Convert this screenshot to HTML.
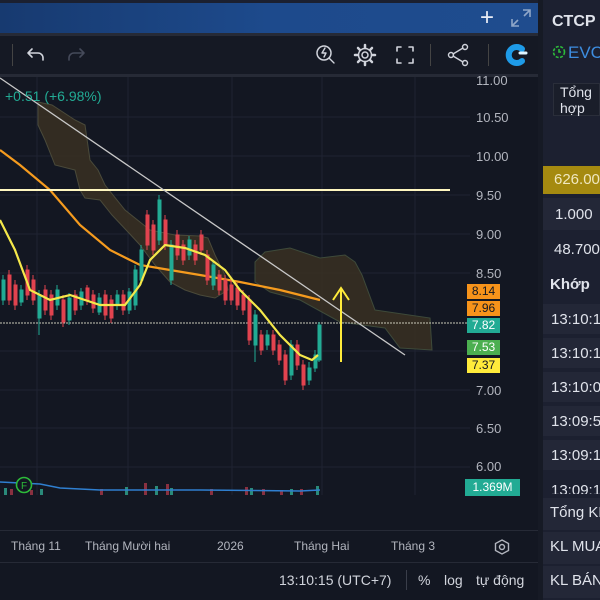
<!DOCTYPE html>
<html><head><meta charset="utf-8"><style>
*{margin:0;padding:0;box-sizing:border-box}
body{width:600px;height:600px;overflow:hidden;background:#131722;font-family:"Liberation Sans",sans-serif;position:relative}
.a{position:absolute}
.rp{left:538px;top:0;width:62px;height:600px;background:#1c2030}
.rt{color:#e0e3eb;font-size:15px;left:552px;white-space:nowrap}
.row{left:543px;width:57px;height:30px;background:#232737}
.pl{left:467px;width:33px;height:15px;font-size:12px;text-align:center;line-height:15px;color:#131722}
.ax{left:476px;color:#b2b5be;font-size:13px}
</style></head><body>
<div class="a" style="left:0;top:0;width:538px;height:3px;background:#1b2030"></div>
<div class="a" style="left:0;top:3px;width:538px;height:30px;background:linear-gradient(90deg,#173a70,#1d4a8c 50%,#1f4c8e)"></div>
<div class="a" style="left:480px;top:6px;color:#e8ecf5;font-size:24px;line-height:24px">+</div>
<svg class="a" style="left:510px;top:8px" width="22" height="20" viewBox="0 0 22 20" fill="none" stroke="#8fa6c8" stroke-width="1.6"><path d="M13 2h7v7M20 2l-6 6M9 18H2v-7M2 18l6-6"/></svg>
<div class="a" style="left:0;top:33px;width:538px;height:3px;background:#262a36"></div>
<div class="a" style="left:0;top:36px;width:538px;height:38px;background:#151924"></div>
<div class="a" style="left:0;top:74px;width:538px;height:3px;background:#262a36"></div>
<div class="a" style="left:12px;top:44px;width:1px;height:22px;background:#444"></div>
<div class="a" style="left:430px;top:44px;width:1px;height:22px;background:#444"></div>
<div class="a" style="left:488px;top:44px;width:1px;height:22px;background:#444"></div>
<svg class="a" style="left:0;top:36px" width="538" height="38" fill="none" stroke-linecap="round" stroke-linejoin="round">
<path d="M32 13l-4 4 4 4M28 17h10a5 5 0 0 1 5 5v2" stroke="#d1d4dc" stroke-width="1.6"/>
<path d="M80 13l4 4-4 4M84 17H74a5 5 0 0 0-5 5v2" stroke="#454a5a" stroke-width="1.6"/>
<circle cx="324" cy="17" r="7" stroke="#d1d4dc" stroke-width="1.5"/><path d="M329 22l5 5M325 12l-3 5h4l-2 4" stroke="#d1d4dc" stroke-width="1.4"/>
<circle cx="365" cy="19" r="3" stroke="#d1d4dc" stroke-width="1.5"/><path d="M365 9v3M365 26v3M355 19h3M372 19h3M358 12l2 2M370 24l2 2M358 26l2-2M370 14l2-2" stroke="#d1d4dc" stroke-width="2.5"/><circle cx="365" cy="19" r="6.5" stroke="#d1d4dc" stroke-width="1.5"/>
<path d="M397 15v-4h4M409 11h4v4M413 23v4h-4M401 27h-4v-4" stroke="#d1d4dc" stroke-width="1.6"/>
<circle cx="451" cy="19" r="2.5" stroke="#d1d4dc" stroke-width="1.4"/><circle cx="465" cy="11" r="2.5" stroke="#d1d4dc" stroke-width="1.4"/><circle cx="465" cy="27" r="2.5" stroke="#d1d4dc" stroke-width="1.4"/><path d="M453 18l10-6M453 20l10 6" stroke="#d1d4dc" stroke-width="1.4"/>
<path d="M522 13a8 8 0 1 0 0 12" stroke="#1e9be8" stroke-width="6"/><path d="M520 17h6" stroke="#e0f4ff" stroke-width="3"/>
</svg>
<svg class="a" style="left:0;top:77px" width="538" height="488">
<g stroke="#1f2332" stroke-width="1">
<path d="M0 40H470M0 79H470M0 118H470M0 157H470M0 196H470M0 274H470M0 313H470M0 351H470M0 390H470"/>
<path d="M37 0V418M128 0V418M232 0V418M322 0V418M415 0V418"/>
</g>
<g transform="translate(0,-77)">
<path d="M38 102L52 105 75 120 85 125 90 160 98 170 105 185 125 210 150 230 175 235 200 236 208 238 215 255 225 275 228 290 215 298 200 295 185 290 170 282 155 265 140 245 128 232 112 215 100 200 85 198 80 190 75 170 55 165 45 140 38 125Z" fill="#3a3022" fill-opacity=".85" stroke="#4a4a3a" stroke-width="1"/>
<path d="M255 262L265 252 290 248 320 258 345 255 355 262 362 275 375 310 430 318 432 350 400 348 385 328 340 322 300 300 270 292 255 282Z" fill="#3a3022" fill-opacity=".85" stroke="#3e4a3a" stroke-width="1"/>
<path d="M0 150L20 165 50 190 80 225 110 250 140 265 170 270 200 275 240 282 280 290 320 300" fill="none" stroke="#f59b1e" stroke-width="2.2"/>
<line x1="0" y1="190" x2="450" y2="190" stroke="#fff7c0" stroke-width="2"/>
<line x1="0" y1="323" x2="470" y2="323" stroke="#c8c8b8" stroke-width="1" stroke-dasharray="2 1"/>
<line x1="0" y1="78" x2="405" y2="355" stroke="#c8c8c8" stroke-width="1.3"/>
<g stroke-width="1">
<g fill="#22ab94" stroke="#22ab94"><path d="M3 275V305M21 285V306M39 290V335M57 285V310M69 293V325M81 288V310M99 293V315M117 290V310M129 288V314M135 265V310M141 245V285M159 195V245M171 240V285M189 236V260M213 260V290M255 310V362M267 330V350M291 340V380M309 362V385M315 350V372M319 322V362"/>
<rect x="2" y="280" width="3" height="20"/><rect x="20" y="290" width="3" height="12"/><rect x="38" y="295" width="3" height="23"/><rect x="56" y="290" width="3" height="15"/><rect x="68" y="298" width="3" height="22"/><rect x="80" y="292" width="3" height="13"/><rect x="98" y="298" width="3" height="14"/><rect x="116" y="295" width="3" height="10"/><rect x="128" y="292" width="3" height="18"/><rect x="134" y="270" width="3" height="35"/><rect x="140" y="250" width="3" height="30"/><rect x="158" y="200" width="3" height="40"/><rect x="170" y="245" width="3" height="35"/><rect x="188" y="240" width="3" height="15"/><rect x="212" y="265" width="3" height="20"/><rect x="254" y="315" width="3" height="30"/><rect x="266" y="335" width="3" height="10"/><rect x="290" y="345" width="3" height="30"/><rect x="308" y="368" width="3" height="12"/><rect x="314" y="355" width="3" height="13"/><rect x="318" y="325" width="3" height="35"/></g>
<g fill="#e2434f" stroke="#e2434f"><path d="M9 270V305M15 280V310M27 265V300M33 275V305M45 285V315M51 290V320M63 295V327M75 290V315M87 285V305M93 290V313M105 290V320M111 295V323M123 290V315M147 210V250M153 220V255M165 215V250M177 230V260M183 240V265M195 240V265M201 230V255M207 250V285M219 270V295M225 275V305M231 280V305M237 283V310M243 290V315M249 295V345M261 330V355M273 330V355M279 340V365M285 350V385M297 340V370M303 360V390"/>
<rect x="8" y="275" width="3" height="25"/><rect x="14" y="285" width="3" height="20"/><rect x="26" y="270" width="3" height="25"/><rect x="32" y="280" width="3" height="20"/><rect x="44" y="290" width="3" height="20"/><rect x="50" y="295" width="3" height="20"/><rect x="62" y="300" width="3" height="22"/><rect x="74" y="295" width="3" height="15"/><rect x="86" y="288" width="3" height="12"/><rect x="92" y="295" width="3" height="13"/><rect x="104" y="295" width="3" height="20"/><rect x="110" y="300" width="3" height="18"/><rect x="122" y="295" width="3" height="15"/><rect x="146" y="215" width="3" height="30"/><rect x="152" y="225" width="3" height="25"/><rect x="164" y="220" width="3" height="25"/><rect x="176" y="235" width="3" height="20"/><rect x="182" y="245" width="3" height="15"/><rect x="194" y="245" width="3" height="15"/><rect x="200" y="235" width="3" height="15"/><rect x="206" y="255" width="3" height="25"/><rect x="218" y="275" width="3" height="15"/><rect x="224" y="280" width="3" height="20"/><rect x="230" y="285" width="3" height="15"/><rect x="236" y="288" width="3" height="17"/><rect x="242" y="295" width="3" height="15"/><rect x="248" y="300" width="3" height="40"/><rect x="260" y="335" width="3" height="15"/><rect x="272" y="335" width="3" height="15"/><rect x="278" y="345" width="3" height="15"/><rect x="284" y="355" width="3" height="25"/><rect x="296" y="345" width="3" height="20"/><rect x="302" y="365" width="3" height="20"/></g>
</g>
<path d="M0 220L15 250 30 290 50 300 70 295 100 305 125 305 140 285 150 260 165 245 185 248 205 255 225 270 240 290 260 310 280 335 300 355 312 360 318 355" fill="none" stroke="#f5e84a" stroke-width="2.2"/>
<path d="M341 362V290M333 300L341 288 349 300" fill="none" stroke="#ffeb3b" stroke-width="2"/>
<g fill="#2a8a7a"><rect x="4" y="488" width="3" height="7"/><rect x="40" y="489" width="3" height="6"/><rect x="125" y="487" width="3" height="8"/><rect x="155" y="486" width="3" height="9"/><rect x="170" y="488" width="3" height="7"/><rect x="250" y="488" width="3" height="7"/><rect x="290" y="489" width="3" height="6"/><rect x="316" y="486" width="3" height="9"/></g>
<g fill="#8a3040"><rect x="10" y="489" width="3" height="6"/><rect x="30" y="490" width="3" height="5"/><rect x="100" y="489" width="3" height="6"/><rect x="144" y="483" width="3" height="12"/><rect x="166" y="484" width="3" height="11"/><rect x="210" y="489" width="3" height="6"/><rect x="245" y="487" width="3" height="8"/><rect x="262" y="489" width="3" height="6"/><rect x="280" y="490" width="3" height="5"/><rect x="300" y="489" width="3" height="6"/></g>
<path d="M0 482L40 484 60 488 100 490 200 490 300 491 320 490" fill="none" stroke="#2f7fd0" stroke-width="1.5"/>
<circle cx="24" cy="485" r="7.5" fill="#131722" stroke="#2dbb3a" stroke-width="1.6"/><text x="24" y="489" fill="#2dbb3a" font-size="10" text-anchor="middle" font-family="Liberation Sans">F</text>
</g>
</svg>
<div class="a" style="left:5px;top:88px;color:#22ab94;font-size:14px">+0.51 (+6.98%)</div>
<div class="a ax" style="top:73px">11.00</div>
<div class="a ax" style="top:110px">10.50</div>
<div class="a ax" style="top:149px">10.00</div>
<div class="a ax" style="top:188px">9.50</div>
<div class="a ax" style="top:227px">9.00</div>
<div class="a ax" style="top:266px">8.50</div>
<div class="a ax" style="top:383px">7.00</div>
<div class="a ax" style="top:421px">6.50</div>
<div class="a ax" style="top:459px">6.00</div>
<div class="a pl" style="top:284px;background:#f7931a">8.14</div>
<div class="a pl" style="top:301px;background:#f7931a">7.96</div>
<div class="a pl" style="top:318px;background:#22ab94;color:#fff">7.82</div>
<div class="a pl" style="top:340px;background:#4caf50;color:#fff">7.53</div>
<div class="a pl" style="top:358px;background:#ffeb3b">7.37</div>
<div class="a pl" style="top:479px;width:55px;left:465px;background:#22ab94;color:#fff;height:17px;line-height:17px">1.369M</div>
<div class="a" style="left:0;top:530px;width:538px;height:1px;background:#262a36"></div>
<div class="a" style="left:0;top:562px;width:538px;height:1px;background:#262a36"></div>
<div class="a" style="left:11px;top:539px;color:#b2b5be;font-size:12px">Tháng 11</div>
<div class="a" style="left:85px;top:539px;color:#b2b5be;font-size:12px">Tháng Mười hai</div>
<div class="a" style="left:217px;top:539px;color:#b2b5be;font-size:12px">2026</div>
<div class="a" style="left:294px;top:539px;color:#b2b5be;font-size:12px">Tháng Hai</div>
<div class="a" style="left:391px;top:539px;color:#b2b5be;font-size:12px">Tháng 3</div>
<svg class="a" style="left:493px;top:538px" width="18" height="18" fill="none" stroke="#b2b5be" stroke-width="1.4"><path d="M9 2l6.5 3.5v7L9 16 2.5 12.5v-7z"/><circle cx="9" cy="9" r="2.5"/></svg>
<div class="a" style="left:279px;top:572px;color:#d1d4dc;font-size:14px">13:10:15 (UTC+7)</div>
<div class="a" style="left:406px;top:570px;width:1px;height:20px;background:#3a3e4a"></div>
<div class="a" style="left:418px;top:572px;color:#d1d4dc;font-size:14px">%</div>
<div class="a" style="left:444px;top:572px;color:#d1d4dc;font-size:14px">log</div>
<div class="a" style="left:476px;top:572px;color:#d1d4dc;font-size:14px">tự động</div>
<div class="a rp"></div>
<div class="a" style="left:538px;top:0;width:5px;height:600px;background:#161a25"></div>
<div class="a rt" style="top:13px;font-weight:bold;font-size:16px">CTCP</div>
<svg class="a" style="left:552px;top:45px" width="14" height="14" fill="none" stroke="#2dbb3a" stroke-width="1.6"><circle cx="7" cy="7" r="5.5" stroke-dasharray="3 1.5"/><path d="M7 4v3h2"/></svg>
<div class="a" style="left:568px;top:43px;color:#3d8de0;font-size:17px">EVC</div>
<div class="a" style="left:553px;top:83px;width:47px;height:33px;background:#1a1e2a;border:1px solid #2a2e3a"></div>
<div class="a rt" style="left:560px;top:84px;font-size:14px;line-height:16px">Tổng<br>hợp</div>
<div class="a" style="left:543px;top:166px;width:57px;height:28px;background:#a58a10"></div>
<div class="a rt" style="left:554px;top:171px;color:#f0e8c0">626.000</div>
<div class="a row" style="top:198px;height:32px"></div>
<div class="a rt" style="left:555px;top:206px">1.000</div>
<div class="a rt" style="left:554px;top:241px">48.700</div>
<div class="a row" style="top:268px;height:32px;background:#1c2030"></div>
<div class="a rt" style="left:550px;top:276px;font-weight:bold">Khớp</div>
<div class="a row" style="top:304px"></div><div class="a rt" style="left:551px;top:311px">13:10:17</div>
<div class="a row" style="top:338px"></div><div class="a rt" style="left:551px;top:345px">13:10:14</div>
<div class="a row" style="top:372px"></div><div class="a rt" style="left:551px;top:379px">13:10:05</div>
<div class="a row" style="top:406px"></div><div class="a rt" style="left:551px;top:413px">13:09:59</div>
<div class="a row" style="top:440px"></div><div class="a rt" style="left:551px;top:447px">13:09:12</div>
<div class="a" style="left:543px;top:474px;width:57px;height:20px;overflow:hidden"><div class="a rt" style="left:8px;top:8px">13:09:10</div></div>
<div class="a row" style="top:498px;height:32px"></div><div class="a rt" style="left:550px;top:504px">Tổng KL</div>
<div class="a row" style="top:532px;height:32px"></div><div class="a rt" style="left:550px;top:538px">KL MUA</div>
<div class="a row" style="top:566px;height:32px"></div><div class="a rt" style="left:550px;top:572px">KL BÁN</div>
</body></html>
